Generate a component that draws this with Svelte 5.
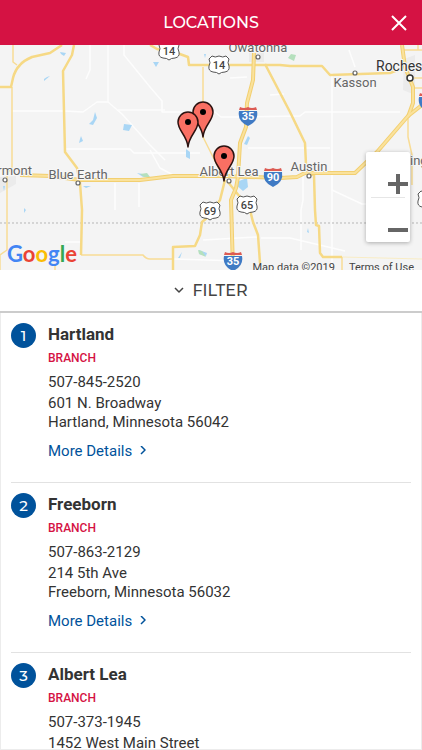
<script>
	let { title = 'LOCATIONS' } = $props();

	const branches = [
		{ name: 'Hartland', phone: '507-845-2520', street: '601 N. Broadway', city: 'Hartland, Minnesota 56042' },
		{ name: 'Freeborn', phone: '507-863-2129', street: '214 5th Ave', city: 'Freeborn, Minnesota 56032' },
		{ name: 'Albert Lea', phone: '507-373-1945', street: '1452 West Main Street', city: 'Albert Lea, Minnesota 56007' }
	];

	const minorRoads = [
		'M11 66H65L83 67L97 57H108L122 69L150 100L165 115',
		'M108 57V0',
		'M90 0V25L86 34',
		'M124 0V10L150 42L162 56V67H215L221 72H240',
		'M118 65H165',
		'M65 104H130L134 108H200',
		'M230 33L247 32M270 50L284 49',
		'M240 72L300 71L305 67H400M332 28V225',
		'M332 105V145L362 159H372M355 22L349 5',
		'M303 129V155L301 165V205M261 193H290L345 206',
		'M115 138V165M139 138V162M65 197H82',
		'M150 105L160 123L175 131M248 103H330',
		'M203 195L258 192M173 214L240 216'
	];

	const roads = [
		'M13 0V17L17 20M12 42V122L7 129V205L0 210V225',
		'M81 210H143Q146 214 150 214H173',
		'M203 22V92L213 112L223 132',
		'M403 5H422M414 33H422M414 43H422M418 0V5',
		'M342 225V212M55 219V225',
		'M408 72V92L412 110V140'
	];

	const highways = [
		'M62 0L50 8L32 12Q23 16 20 20Q15 25 13 33L11 42H0',
		'M74 0L72 10L63 26L65 107L77 123L80 138L82 165L81 210',
		'M150 0L157 4L177 8L188 12L189 20H280L290 21H322L330 30L390 28L403 23',
		'M265 19L290 67L305 98L306 120L305 128L314 130L315 165L316 180L319 181L320 208L323 212H342',
		'M225 135L220 155L208 172L202 177L200 190L195 201L173 202V225',
		'M228 137L240 152L250 165L253 177L258 190L260 218'
	];

	const freeways = [
		'M20 130L50 131L80 135H140L173 131H223L280 133L297 132L305 128H355L377 107L408 71L422 60',
		'M254 8L253 35L247 58L246 82L240 98L238 132L236 143L231 155L233 225',
		'M402 0L405 22L413 42V58L408 72'
	];

	const lakes = [
		'M60 7L66 8L64 11L61 9Z',
		'M44 36L50 31L47 32L44 34Z',
		'M95 67L97 73L93 80L89 79L93 75Z',
		'M81 91L83 96L79 98L80 94Z',
		'M124 79L132 80L129 86L123 85Z',
		'M153 17L159 17L156 22Z',
		'M204 9L206 9L205 13Z',
		'M186 104L190 107L190 114L186 112Z',
		'M248 91L250 93L247 100L244 99Z',
		'M239 136L247 133L248 142L243 146L236 140Z',
		'M24 163L26 165L24 168Z',
		'M3 141L5 141L4 146Z',
		'M308 183L309 188L307 187Z',
		'M178 213L182 207L180 213Z',
		'M83 141L91 141L86 143Z',
		'M199 205L207 208L206 211L199 209Z',
		'M137 128L148 130L143 132Z'
	];

	const parks = ['M291 9L296 10L294 16L288 13Z', 'M140 129L147 128L150 132L144 132Z', 'M198 205L202 206L206 212L199 209Z'];

	const towns = [
		{ x: 258, y: 7, label: 'Owatonna', dot: [258, 12] },
		{ x: 355, y: 42, label: 'Kasson', dot: [355, 28] },
		{ x: 78, y: 134, label: 'Blue Earth', dot: [78, 138] },
		{ x: 6, y: 130, label: 'Fairmont', dot: [5, 135] },
		{ x: 229, y: 131, label: 'Albert Lea', dot: [229, 136] },
		{ x: 309, y: 126, label: 'Austin', dot: [309, 131] }
	];

	const usRoutes = [
		{ x: 169, y: 6, n: 14 },
		{ x: 219, y: 20, n: 14 },
		{ x: 210, y: 166, n: 69 },
		{ x: 247, y: 160, n: 65 },
		{ x: 428, y: 155, n: 63 }
	];

	const interstates = [
		{ x: 248, y: 71, n: 35 },
		{ x: 273, y: 132, n: 90 },
		{ x: 233, y: 216, n: 35 },
		{ x: 428, y: 57, n: 90 }
	];

	const pins = [
		{ x: 203, y: 92 },
		{ x: 188, y: 102 },
		{ x: 224, y: 136 }
	];
</script>

<div class="page">
	<header class="topbar">
		<h1>{title}</h1>
		<button class="close" aria-label="Close">
			<svg width="16" height="16" viewBox="0 0 16 16"><path d="M1 1L15 15M15 1L1 15" /></svg>
		</button>
	</header>

	<section class="map" aria-label="Map of branches">
		<svg class="canvas" viewBox="0 0 422 225" preserveAspectRatio="xMidYMid slice">
			<rect width="422" height="225" fill="#f4f4f4" />
			<path d="M249 7H264V17H249ZM404 14L415 10V50L403 45ZM0 132L16 131V139L0 148Z" fill="#ebebeb" />
			<g class="minor">
				{#each minorRoads as d}<path {d} />{/each}
			</g>
			<g fill="#a9d6f5">
				{#each lakes as d}<path {d} />{/each}
			</g>
			<g fill="#b5e0bd">
				{#each parks as d}<path {d} />{/each}
			</g>
			<path class="border" d="M0 178H422" />
			<path d="M342 212L422 214" fill="none" stroke="#f8ecc5" />
			<g class="road">
				{#each roads as d}<path {d} />{/each}
			</g>
			<g class="highway">
				{#each highways as d}<path {d} />{/each}
			</g>
			<g class="freeway-edge">
				{#each freeways as d}<path {d} />{/each}
			</g>
			<g class="freeway">
				{#each freeways as d}<path {d} />{/each}
			</g>

			<!-- route shields -->
			{#each usRoutes as r}
				<g transform="translate({r.x} {r.y})">
					<path
						class="us"
						d="M-7 -9Q-4 -7 0 -9Q4 -7 7 -9L10 -6Q8 -2 10 1Q11 6 6 7Q2 7 0 9Q-2 7 -6 7Q-11 6 -10 1Q-8 -2 -10 -6Z"
					/>
					<text class="us-number" y="4">{r.n}</text>
				</g>
			{/each}
			{#each interstates as r}
				<g transform="translate({r.x} {r.y})">
					<path d="M-9 -5H9Q11 5 0 10Q-11 5 -9 -5Z" fill="#3f7ac4" />
					<path d="M-8 -9Q-4 -7 0 -9Q4 -7 8 -9L9 -6H-9Z" fill="#dc5b53" />
					<text class="interstate-number" y="4">{r.n}</text>
				</g>
			{/each}

			{#each towns as t}
				<circle class="dot" cx={t.dot[0]} cy={t.dot[1]} r="2" />
				<text class="town" x={t.x} y={t.y}>{t.label}</text>
			{/each}
			<circle class="dot city-dot" cx="410" cy="33" r="3" />
			<text class="city" x="376" y="26">Rochester</text>
			<text class="town cut" x="410" y="120">ing</text>

			{#each pins as p}
				<g transform="translate({p.x} {p.y})">
					<path class="pin" d="M0 0C-1 -12 -10 -16 -10 -25A10 10 0 0 1 10 -25C10 -16 1 -12 0 0Z" />
					<circle cy="-25" r="3" />
				</g>
			{/each}
		</svg>

		<div class="zoom">
			<button aria-label="Zoom in">
				<svg width="20" height="20" viewBox="0 0 20 20"><path d="M0 10H20M10 0V20" /></svg>
			</button>
			<button aria-label="Zoom out">
				<svg width="20" height="20" viewBox="0 0 20 20"><path d="M0 10H20" /></svg>
			</button>
		</div>

		<a class="google" href="#google" aria-label="Google"><span class="b">G</span><span class="r">o</span><span class="y">o</span><span class="b">g</span><span class="g">l</span><span class="r">e</span></a>
		<div class="credits">
			<span>Map data ©2019</span>
			<a href="#terms">Terms of Use</a>
		</div>
	</section>

	<button class="filter">
		<svg width="10" height="10" viewBox="0 0 10 10"><path d="M1 2L5 6L9 2" /></svg>
		FILTER
	</button>

	<ol class="list">
		{#each branches as branch, i}
			<li>
				<span class="badge">{i + 1}</span>
				<div class="info">
					<h2>{branch.name}</h2>
					<p class="type">BRANCH</p>
					<p class="phone">{branch.phone}</p>
					<address>{branch.street}<br />{branch.city}</address>
					<a class="more" href="#branch-{i + 1}">
						More Details
						<svg width="6" height="10" viewBox="0 0 6 10"><path d="M1 0L5 4L1 8" /></svg>
					</a>
				</div>
			</li>
		{/each}
	</ol>
</div>

<style>
	:global(body) {
		background: #fff;
	}
	.page {
		display: flex;
		flex-direction: column;
		height: 100vh;
		font-family: Roboto, sans-serif;
		color: #333;
	}
	button {
		border: 0;
		padding: 0;
		background: none;
		cursor: pointer;
	}
	path {
		stroke-linejoin: round;
	}

	.topbar {
		flex: none;
		display: grid;
		grid-template-columns: 46px 1fr 46px;
		align-items: center;
		height: 45px;
		background: #d51243;
		color: #fff;
	}
	h1 {
		grid-column: 2;
		margin: 0;
		text-align: center;
		font: 500 16px/24px Montserrat, Inter, sans-serif;
	}
	.close {
		display: flex;
		justify-content: center;
		height: 44px;
		align-items: center;
	}
	.close path {
		stroke: #fff;
		stroke-width: 2;
	}

	.map {
		flex: none;
		position: relative;
		height: 225px;
		overflow: hidden;
	}
	.canvas {
		display: block;
		width: 100%;
		height: 100%;
	}
	.canvas text {
		text-anchor: middle;
	}
	.minor,
	.road,
	.highway,
	.freeway,
	.freeway-edge {
		fill: none;
	}
	.minor {
		stroke: #fdfdfd;
		stroke-width: 1.5;
	}
	.road {
		stroke: #f8dc95;
		stroke-width: 1.5;
	}
	.highway {
		stroke: #f6d985;
		stroke-width: 2.5;
	}
	.freeway-edge {
		stroke: #f2cf70;
		stroke-width: 4;
	}
	.freeway {
		stroke: #fae29c;
		stroke-width: 2;
	}
	.border {
		stroke: #b5b5b5;
		stroke-dasharray: 2 2;
	}
	.us {
		fill: #fff;
		stroke: #555;
	}
	.us-number {
		font-size: 11px;
		font-weight: 500;
		fill: #444;
	}
	.interstate-number {
		font-size: 11px;
		font-weight: 700;
		fill: #fff;
	}
	.dot {
		fill: #fff;
		stroke: #666;
		stroke-width: 1.2;
	}
	.city-dot {
		stroke: #333;
		stroke-width: 1.5;
	}
	.town,
	.city {
		paint-order: stroke;
		stroke: #f7f7f7;
		stroke-width: 2;
	}
	.town {
		font-size: 13px;
		fill: #666;
	}
	.canvas .city {
		font-size: 14px;
		fill: #333;
		text-anchor: start;
	}
	.canvas .cut {
		text-anchor: start;
	}
	.pin {
		fill: #f96f63;
		stroke: #2b1210;
		stroke-width: 1.5;
	}

	.zoom {
		position: absolute;
		top: 107px;
		right: 12px;
		display: flex;
		flex-direction: column;
		width: 44px;
		background: #fff;
		border-radius: 2px;
		box-shadow: 0 1px 4px rgba(0, 0, 0, 0.3);
	}
	.zoom button {
		display: flex;
		justify-content: flex-end;
		align-items: flex-end;
		height: 45px;
		padding: 0 2px 3px 0;
		box-sizing: border-box;
	}
	.zoom button + button {
		position: relative;
		padding-bottom: 2px;
	}
	.zoom button + button::before {
		content: '';
		position: absolute;
		top: 0;
		left: 5px;
		right: 5px;
		border-top: 1px solid #e6e6e6;
	}
	.zoom path {
		stroke: #666;
		stroke-width: 4;
	}

	.google {
		position: absolute;
		left: 7px;
		bottom: 2px;
		font: 700 22px/28px Lato, sans-serif;
		text-decoration: none;
	}
	.b {
		color: #4285f4;
	}
	.r {
		color: #ea4335;
	}
	.y {
		color: #fbbc05;
	}
	.g {
		color: #34a853;
	}
	.credits {
		position: absolute;
		right: 8px;
		bottom: -6px;
		display: flex;
		gap: 14px;
		font-size: 11px;
		line-height: 16px;
		color: #444;
	}
	.credits a {
		color: inherit;
		text-decoration: none;
	}

	.filter {
		flex: none;
		display: flex;
		justify-content: center;
		align-items: center;
		gap: 8px;
		height: 43px;
		border-bottom: 2px solid #ccc;
		font: 500 16px/24px Montserrat, Inter, sans-serif;
		color: #444;
	}
	.filter path {
		fill: none;
		stroke: #444;
		stroke-width: 1.5;
	}

	.list {
		flex: 1;
		min-height: 0;
		margin: 0;
		padding: 0 10px;
		overflow-y: auto;
		scrollbar-width: none;
		list-style: none;
		border: 1px solid #ececec;
		border-top: 0;
	}
	li {
		display: flex;
		gap: 12px;
		padding: 9px 0 19px;
		border-bottom: 1px solid #e2e2e2;
	}
	.badge {
		flex: none;
		width: 25px;
		height: 25px;
		margin-top: 1px;
		border-radius: 50%;
		background: #00529b;
		color: #fff;
		text-align: center;
		font: 500 15px/25px Montserrat, Inter, sans-serif;
	}
	h2,
	p {
		margin: 0;
		line-height: 24px;
	}
	h2 {
		font-size: 17px;
		font-weight: 700;
	}
	.type {
		font-size: 12px;
		font-weight: 500;
		color: #d51243;
	}
	.phone {
		font-size: 15px;
	}
	address {
		margin-bottom: 7px;
		font-size: 15px;
		font-style: normal;
		line-height: 19px;
	}
	.more {
		display: flex;
		align-items: center;
		gap: 8px;
		font-size: 15px;
		line-height: 24px;
		color: #00529b;
		text-decoration: none;
	}
	.more path {
		fill: none;
		stroke: #00529b;
		stroke-width: 1.5;
	}
</style>
